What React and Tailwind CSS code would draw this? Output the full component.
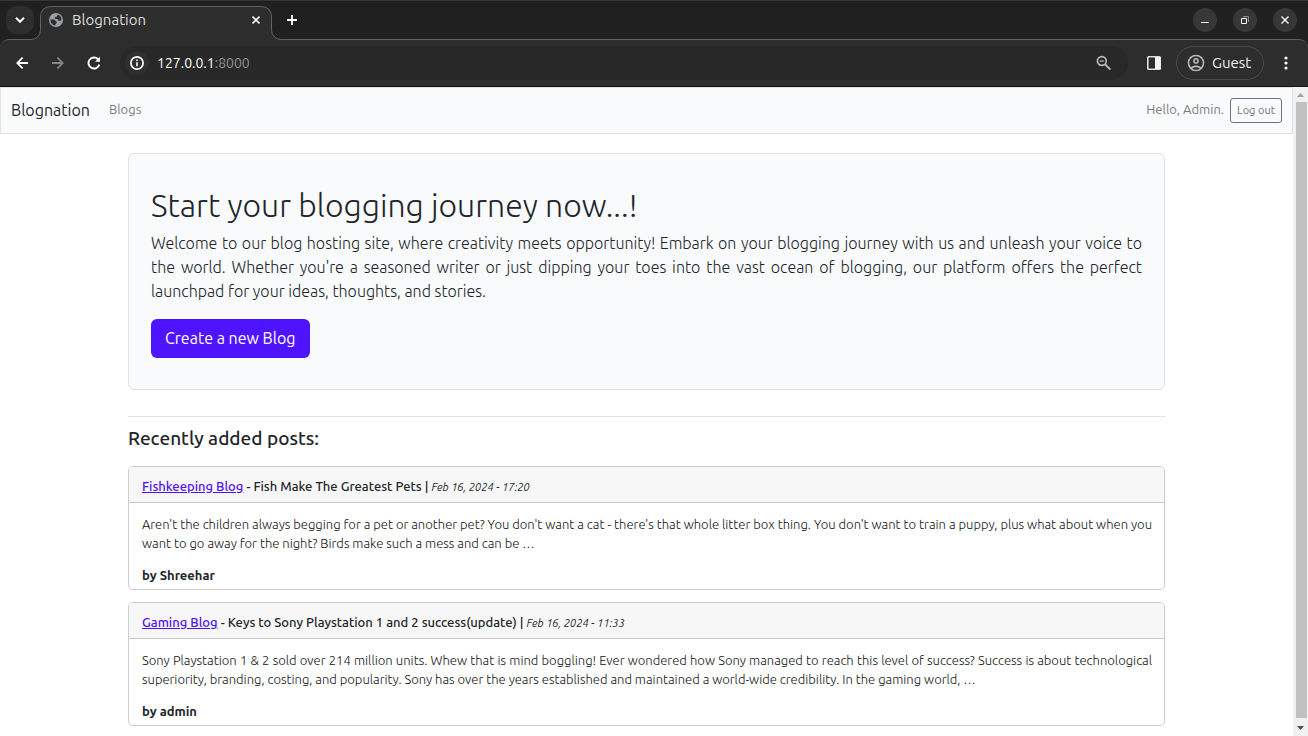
const posts = [
  {
    blog: "Fishkeeping Blog",
    title: "Fish Make The Greatest Pets",
    date: "Feb 16, 2024 - 17:20",
    text: "Aren't the children always begging for a pet or another pet? You don't want a cat - there's that whole litter box thing. You don't want to train a puppy, plus what about when you want to go away for the night? Birds make such a mess and can be …",
    author: "Shreehar",
  },
  {
    blog: "Gaming Blog",
    title: "Keys to Sony Playstation 1 and 2 success(update)",
    date: "Feb 16, 2024 - 11:33",
    text: "Sony Playstation 1 & 2 sold over 214 million units. Whew that is mind boggling! Ever wondered how Sony managed to reach this level of success? Success is about technological superiority, branding, costing, and popularity. Sony has over the years established and maintained a world-wide credibility. In the gaming world, …",
    author: "admin",
  },
];

function MIcon({ d, size = 16, className = "" }) {
  return (
    <svg viewBox="0 0 24 24" width={size} height={size} fill="currentColor" aria-hidden="true" className={className}>
      <path d={d} />
    </svg>
  );
}

const ICONS = {
  back: "M20 10.800v2.400H8.600l5.100 5.100L12 20l-8-8 8-8 1.700 1.700-5.100 5.100z",
  forward: "M4 10.800v2.400h11.400l-5.100 5.100L12 20l8-8-8-8-1.700 1.700 5.100 5.100z",
  person:
    "M12 2a10 10 0 1 0 0 20 10 10 0 0 0 0-20zM7.350 18.500C8.660 17.560 10.260 17 12 17s3.340.56 4.650 1.500C15.340 19.440 13.740 20 12 20s-3.340-.56-4.650-1.500zm10.790-1.380C16.450 15.800 14.320 15 12 15s-4.450.8-6.140 2.120A7.960 7.960 0 0 1 4 12c0-4.420 3.580-8 8-8s8 3.580 8 8c0 1.950-.7 3.730-1.860 5.120zM12 6c-1.930 0-3.500 1.570-3.500 3.500S10.070 13 12 13s3.500-1.570 3.500-3.500S13.930 6 12 6zm0 5c-.83 0-1.500-.67-1.500-1.500S11.170 8 12 8s1.500.67 1.500 1.500S12.830 11 12 11z",
};

function Globe() {
  return (
    <svg width="14" height="14" viewBox="0 0 14 14" aria-hidden="true" className="shrink-0">
      <circle cx="7" cy="7" r="7" fill="#9aa0a6" />
      <path d="M1.400 6.600h3.200c1.300 0 1.500 1.700 2.600 1.800 1 .1.900 1.300.2 1.600L6 12.500C3.500 12 1.300 9.900 1.400 6.600z" fill="#2d2d2d" />
      <path d="M8.400 1.500v1c0 .9-.5 1.300-1.300 1.300-.9 0-1.400.6-1.400 1.300 0 .7.400.9 1.100.9h1.400c.9 0 .8 1.600 1.900 1.800 1.100.2 1.900-.1 2.300-.8.3-2.400-1.400-4.900-4-5.500z" fill="#2d2d2d" />
    </svg>
  );
}

function TabStrip() {
  return (
    <div className="flex h-10 border-t border-[#353535]">
      <button type="button" aria-label="Search tabs" className="ml-1.5 mt-[5px] flex size-7 shrink-0 items-center justify-center rounded-[10px] bg-[#2d2d2d]">
        <svg width="10" height="6" viewBox="0 0 10 6" fill="none" stroke="#fff" strokeWidth="2" aria-hidden="true">
          <path d="M1 .8l4 4 4-4" />
        </svg>
      </button>
      <div className="relative ml-1.5 mt-[5px] flex h-[34px] w-[232px] shrink-0 items-center rounded-t-[10px] border border-b-0 border-[#606060] bg-[#2d2d2d] pl-2 pr-[9px] pb-2">
        <svg className="absolute -left-[11px] bottom-0" width="11" height="10" viewBox="0 0 11 10" aria-hidden="true">
          <path d="M0 10A10 10 0 0 0 10 0h1v10z" fill="#2d2d2d" />
          <path d="M0 9.500h1A9.500 9.500 0 0 0 10.500 0" fill="none" stroke="#606060" />
        </svg>
        <svg className="absolute -right-[11px] bottom-0" width="11" height="10" viewBox="0 0 11 10" aria-hidden="true">
          <path d="M11 10A10 10 0 0 1 1 0H0v10z" fill="#2d2d2d" />
          <path d="M11 9.500h-1A9.500 9.500 0 0 1 .5 0" fill="none" stroke="#606060" />
        </svg>
        <Globe />
        <span className="ml-[9px] flex-1 text-[15px] leading-5 text-[#dedede]">Blognation</span>
        <button type="button" aria-label="Close tab" className="flex size-3 items-center justify-center">
          <svg width="8" height="8" viewBox="0 0 8 8" stroke="#f0f0f0" strokeWidth="1.600" aria-hidden="true">
            <path d="M.5.500l7 7M7.500.500l-7 7" />
          </svg>
        </button>
      </div>
      <div className="ml-[10px] flex flex-1 items-center justify-between pr-[11px] pb-px">
        <button type="button" aria-label="New tab" className="flex size-5 items-center justify-center">
          <svg width="10" height="10" viewBox="0 0 10 10" stroke="#fff" strokeWidth="1.800" aria-hidden="true">
            <path d="M5 0v10M0 5h10" />
          </svg>
        </button>
        <div className="flex gap-4">
          <button type="button" aria-label="Minimize" className="flex size-6 items-center justify-center rounded-full bg-[#373737]">
            <svg width="8" height="8" viewBox="0 0 8 8" aria-hidden="true">
              <path d="M0 6h8v1H0z" fill="#fff" />
            </svg>
          </button>
          <button type="button" aria-label="Restore" className="flex size-6 items-center justify-center rounded-full bg-[#373737]">
            <svg width="8" height="8" viewBox="0 0 8 8" fill="none" aria-hidden="true">
              <path d="M2 .5h5.500V6" stroke="#8d8d8d" />
              <path d="M.5 2.500h5v5h-5z" stroke="#fff" />
            </svg>
          </button>
          <button type="button" aria-label="Close window" className="flex size-6 items-center justify-center rounded-full bg-[#373737]">
            <svg width="8" height="8" viewBox="0 0 8 8" stroke="#fff" strokeWidth="1.300" aria-hidden="true">
              <path d="M.5.500l7 7M7.500.500l-7 7" />
            </svg>
          </button>
        </div>
      </div>
    </div>
  );
}

function Toolbar() {
  return (
    <div className="-mt-px flex h-12 items-center rounded-t-[9px] border-t border-b border-t-[#606060] border-b-[#141414] bg-[#2d2d2d] px-3.5">
      <button type="button" aria-label="Back" className="flex size-4 items-center justify-center text-white">
        <MIcon d={ICONS.back} size={18} className="shrink-0" />
      </button>
      <button type="button" aria-label="Forward" className="ml-5 flex size-4 items-center justify-center text-[#858585]">
        <MIcon d={ICONS.forward} size={18} className="shrink-0" />
      </button>
      <button type="button" aria-label="Reload" className="ml-5 flex size-4 items-center justify-center">
        <svg width="14" height="14" viewBox="0 0 14 14" fill="none" stroke="#fff" strokeWidth="1.900" aria-hidden="true">
          <path d="M12.300 8.500A5.500 5.500 0 1 1 11 3.200L12.500 4.700" />
          <path d="M13 .8v5H8z" fill="#fff" stroke="none" />
        </svg>
      </button>
      <div className="ml-[18px] flex h-[34px] flex-1 items-center rounded-full bg-[#282828] pl-[5px] pr-4">
        <button type="button" aria-label="View site information" className="flex size-6 items-center justify-center rounded-full bg-[#2f2f2f]">
          <svg width="14" height="14" viewBox="0 0 14 14" aria-hidden="true">
            <circle cx="7" cy="7" r="6.100" fill="none" stroke="#fff" strokeWidth="1.700" />
            <path d="M6.200 6.200h1.600v4H6.200zM6.200 3.600h1.600v1.500H6.200z" fill="#fff" />
          </svg>
        </button>
        <span className="ml-2 flex-1 text-sm text-white">
          127.0.0.1<span className="text-[#909090]">:8000</span>
        </span>
        <button type="button" aria-label="Zoom" className="flex size-4 items-center justify-center">
          <svg width="16" height="16" viewBox="0 0 16 16" fill="none" stroke="#b5b5b5" aria-hidden="true">
            <circle cx="5.800" cy="6" r="4.400" strokeWidth="1.700" />
            <path d="M3.800 6h4" strokeWidth="1.300" />
            <path d="M9 9.200l5.400 5.400" strokeWidth="2" />
          </svg>
        </button>
      </div>
      <button type="button" aria-label="Side panel" className="ml-[18px] flex size-4 items-center justify-center">
        <svg width="14" height="14" viewBox="0 0 14 14" aria-hidden="true">
          <rect x="0.800" y="0.800" width="12.400" height="12.400" rx="0.800" fill="none" stroke="#e0e0e0" strokeWidth="1.600" />
          <path d="M8 1h5.500v12H8z" fill="#f6f6f6" />
        </svg>
      </button>
      <button type="button" className="ml-3.5 flex h-[34px] w-[88px] items-center rounded-full border border-[#4a4a4a] pl-[9px] text-[15px] text-[#f0f0f0]">
        <MIcon d={ICONS.person} size={20} className="shrink-0 text-[#b8b8b8]" />
        <span className="ml-1.5">Guest</span>
      </button>
      <button type="button" aria-label="Menu" className="ml-3.5 flex size-4 items-center justify-center">
        <svg width="4" height="14" viewBox="0 0 4 14" fill="#f4f4f4" aria-hidden="true">
          <circle cx="2" cy="2" r="1.600" />
          <circle cx="2" cy="7" r="1.600" />
          <circle cx="2" cy="12" r="1.600" />
        </svg>
      </button>
    </div>
  );
}

function Post({ blog, title, date, text, author }) {
  return (
    <article className="overflow-hidden rounded-[5px] border border-[#cdcdcd]">
      <h3 className="border-b border-[#c8c8c8] bg-[#f7f7f7] px-[13px] pt-[9px] pb-[5px] text-[13px] leading-5 font-medium">
        <a href="#blog" className="text-[#5010f5] underline">{blog}</a>
        {" - "}{title}{" | "}
        <em className="text-[11px] font-normal">{date}</em>
      </h3>
      <div className="pl-[13px] pr-3 pt-3 pb-1 text-[13px] leading-[19px]">
        <p className="text-justify font-light text-[#101214]">{text}</p>
        <p className="mt-3 leading-5 font-bold">by {author}</p>
      </div>
    </article>
  );
}

function Scrollbar() {
  return (
    <div aria-hidden="true" className="flex w-[15px] shrink-0 flex-col items-center bg-[#f1f1f1]">
      <svg width="15" height="15" viewBox="0 0 15 15"><path d="M4 10h7L7.500 6z" fill="#a3a3a3" /></svg>
      <div className="ml-0.5 w-[11px] flex-1 bg-[#c1c1c1]" />
      <svg width="15" height="18" viewBox="0 0 15 18"><path d="M4 8h7L7.500 12z" fill="#505050" /></svg>
    </div>
  );
}

export default function App() {
  return (
    <div className="flex h-screen flex-col bg-white font-['Ubuntu','Open_Sans',sans-serif] text-[#212529]">
      <header className="shrink-0 bg-[#202020]">
        <TabStrip />
        <Toolbar />
      </header>
      <div className="flex min-h-0 flex-1">
        <div className="min-w-0 flex-1 overflow-hidden">
          <nav className="flex h-[47px] items-center border border-[#dee2e6] bg-[#f8fafc] px-2.5 pb-px">
            <a href="#home" className="text-base">Blognation</a>
            <a href="#blogs" className="ml-[19px] text-[13px] text-[#7b7e81]">Blogs</a>
            <span className="ml-auto text-[13px] text-[#7b7e81]">Hello, Admin.</span>
            <button type="button" className="ml-1.5 h-[25px] rounded-[3px] border border-[#6c757d] px-1.5 text-[11px] text-[#6c757d]">Log out</button>
          </nav>
          <main className="px-32 pt-[19px]">
            <section className="rounded-md border border-[#dee2e6] bg-[#f8fafc] px-[22px] pt-8 pb-[31px]">
              <h1 className="text-[32px] leading-[38px] font-light">Start your blogging journey now...!</h1>
              <p className="mt-[7px] text-justify text-base leading-6 font-light">
                Welcome to our blog hosting site, where creativity meets opportunity! Embark on your blogging journey with us and unleash your voice to the world. Whether you're a seasoned writer or just dipping your toes into the vast ocean of blogging, our platform offers the perfect launchpad for your ideas, thoughts, and stories.
              </p>
              <button type="button" className="mt-4 block h-[39px] rounded-md bg-[#4f14ff] px-3.5 pb-0.5 text-base text-white">Create a new Blog</button>
            </section>
            <hr className="mt-[26px] border-[#dee2e6]" />
            <h2 className="mt-[9px] text-[19px] leading-6 font-medium">Recently added posts:</h2>
            <div className="mt-4 flex flex-col gap-3">
              {posts.map((p) => <Post key={p.blog} {...p} />)}
            </div>
          </main>
        </div>
        <Scrollbar />
      </div>
    </div>
  );
}
